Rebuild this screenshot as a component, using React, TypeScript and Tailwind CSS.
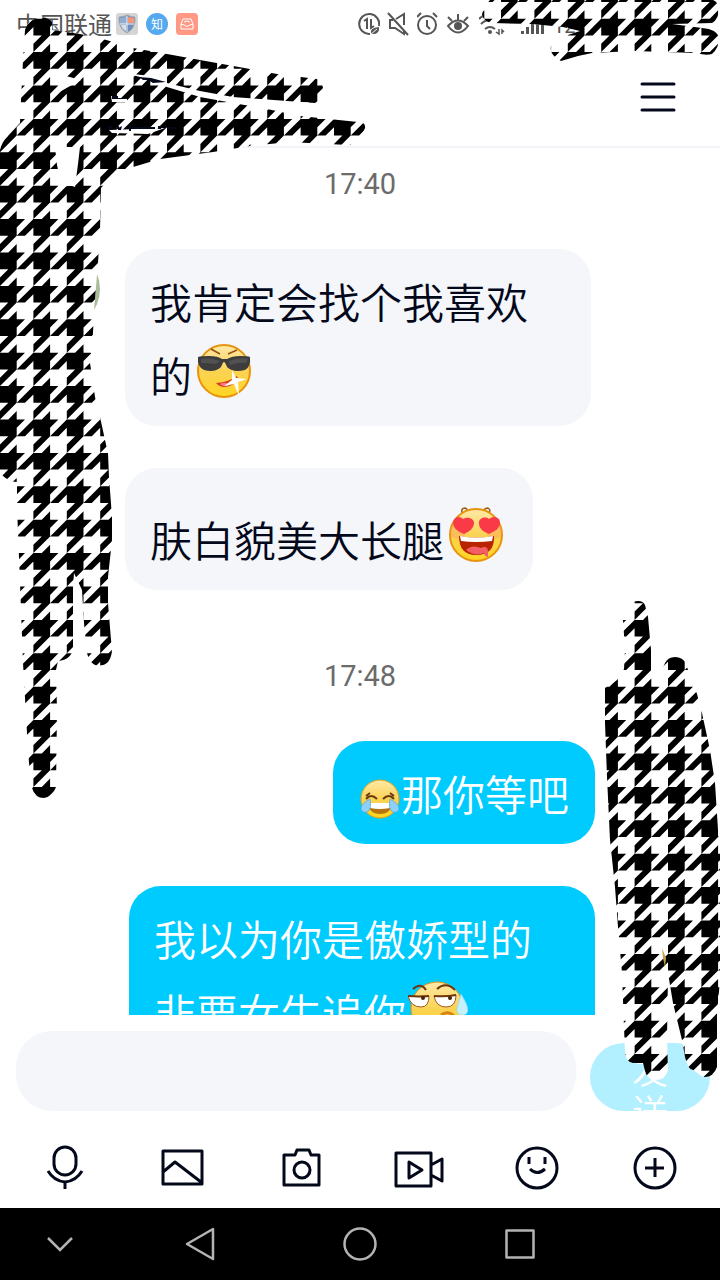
import type { ReactNode } from "react";

const INK = "#03081a";
const CELL = 33.4;

// one path holding every tooth of the houndstooth between two columns
const buildTeeth = (fromCol: number, toCol: number) => {
  const u = CELL / 4;
  const parts: string[] = [];
  for (let row = -1; row < 34; row++) {
    for (let col = fromCol; col < toCol; col++) {
      const at = (px: number, py: number) =>
        `${(col * CELL + px * u).toFixed(1)} ${(row * CELL + 18.7 + py * u).toFixed(1)}`;
      parts.push(
        `M${at(0, 0)}L${at(3, 0)}L${at(2, 1)}L${at(2, 2)}L${at(0, 4)}L${at(0, 3)}L${at(1, 2)}L${at(0, 2)}Z`,
        `M${at(4, 0)}L${at(4, 1)}L${at(3, 2)}L${at(2, 2)}Z`,
        `M${at(2, 3)}L${at(2, 4)}L${at(1, 4)}Z`
      );
    }
  }
  return parts.join("");
};

const leftTeeth = buildTeeth(0, 12);
const rightTeeth = buildTeeth(13, 22);

const LEFT_SHAPE =
  "M25 30Q28 20 38 18Q48 16 52 22L52 30L80 34L103 39L133 48L167 54L200 60L250 69L277 74L317 79Q322 80 323 88Q322 99 315 103L287 101L233 97L200 91L167 83L140 75L167 87L200 97L233 103L267 109L300 116L358 122Q366 122 365 128Q362 138 350 145L327 144L290 142L250 146L213 152L160 159L133 167L113 175L101 188L100 230L98 263L94 310L93 333L90 363L95 397L100 417L105 440L108 453L109 477L112 517L112 540L108 577L108 603L111 640Q114 654 108 662Q103 667 95 665Q89 662 87 653L84 623L82 590L74 573L73 587L73 647Q72 660 58 661L56 670L57 710L56 787Q53 796 44 798Q35 798 32 788L29 763L27 733L23 663L20 583L17 507L17 482Q8 482 0 473V150Q2 142 7 137L20 123L21 100L23 60Z";

const TOP_SHAPE =
  "M490 0Q482 8 482 15Q484 22 493 23L532 24L563 27L580 31L568 35L551 46Q549 55 561 61L578 56L592 53L633 51L697 53Q706 56 712 54Q719 48 719 38Q717 29 702 28L672 24L712 23Q719 19 719 8Q718 2 713 0Z";

const RIGHT_SHAPE =
  "M633 602Q642 599 645 605L648 617L651 650L651 672L662 670L665 663Q668 657 675 657Q683 657 686 664L688 670L697 694L702 713L710 750L715 783L718 830L720 850V980L717 1013L717 1067Q713 1078 703 1077L693 1070Q688 1070 685 1057L682 1040L673 1003L668 973L667 1040L668 1070Q666 1080 655 1080Q647 1079 645 1071L643 1063Q636 1063 633 1063Q626 1062 625 1053L624 1027L622 973L618 927L615 887L610 840L607 777L605 723L605 688L617 680L624 669L625 650L623 620Z";

const LeftScribble = () => (
  <svg className="pointer-events-none absolute left-0 top-0 h-[1280px] w-[400px]" viewBox="0 0 400 1280" aria-hidden="true">
    <clipPath id="left-shape">
      <path d={LEFT_SHAPE} />
    </clipPath>
    <g clipPath="url(#left-shape)">
      <rect width="400" height="1280" fill="#fff" />
      <path d={leftTeeth} />
    </g>
    <path fill="#fff" d="M55 147H80L78 164L75 187Q68 184 62 188L57 165ZM66 76L81 80L54 95ZM111 96L127 99L127 102H112ZM109 130L165 128L148 134L112 133ZM125 73L150 76L165 83L140 77Z" />
    <path fill={INK} d="M139 77L151 78L166 82L153 83L148 80L143 80ZM112 96H118V98H127V99H112ZM108 126H112V130H109ZM117 126H119V129H117ZM122 126L121 130H118V128ZM129 125H131V131H129ZM132 127H155V129H132ZM158 126H161V129H158ZM169 127H176V129H169Z" />
  </svg>
);

const RightScribble = () => (
  <svg className="pointer-events-none absolute right-0 top-0 h-[1280px] w-[260px]" viewBox="460 0 260 1280" aria-hidden="true">
    <clipPath id="right-shape">
      <path d={TOP_SHAPE} />
      <path d={RIGHT_SHAPE} />
    </clipPath>
    <g clipPath="url(#right-shape)">
      <rect x="460" width="260" height="1280" fill="#fff" />
      <path d={rightTeeth} />
    </g>
    <path d="M662 948L666 958L665 967L663 958Z" fill="#c8a04a" />
  </svg>
);

const StatusBar = () => (
  <div className="flex h-12 shrink-0 items-center justify-between pl-4 text-[#555]">
    <div className="flex items-center">
      <span className="mr-1 text-2xl">中国联通</span>
      <svg className="mr-2" width="22" height="22" viewBox="0 0 22 22">
        <rect width="22" height="22" rx="3" fill="#d5d5d5" />
        <path d="M11 2Q15 4 19 4Q20 15 11 20Q2 15 3 4Q7 4 11 2Z" fill="#6d8fc0" stroke="#aaa" />
        <path d="M11 3V11H4V5Q8 5 11 3Z" fill="#93acd2" />
        <path d="M12 4L18 5V10H12Z" fill="#f59676" />
        <path d="M5 12H10V18Q6 16 5 12Z" fill="#d8dfea" />
        <path d="M11 3V19M4 11H18" stroke="#f3f3f3" strokeWidth="1" />
      </svg>
      <span className="mr-2 flex size-[22px] items-center justify-center rounded-full bg-[#55a9ee] text-xs text-white">知</span>
      <svg width="22" height="22" viewBox="0 0 22 22" fill="none" stroke="#fff" strokeWidth="1">
        <rect width="22" height="22" rx="4" fill="#ff9985" stroke="none" />
        <path d="M7 6H15L17 11V16H5V11ZM5 11L8 12Q11 15 14 12L17 11M8 9Q11 7 14 9" />
      </svg>
    </div>
    <div className="flex w-[362px] items-center">
      <svg className="mr-[7px]" width="22" height="24" viewBox="0 0 22 24" fill="none" stroke="currentColor" strokeWidth="2">
        <path d="M12 22A10 10 0 1 1 21 14" />
        <path d="M6 9L9 7V17M13 7V16L16 14" />
        <path d="M13 22Q11 16 21 15Q22 23 13 22Z" fill="currentColor" stroke="none" />
        <path d="M13 22L19 17" stroke="#fff" strokeWidth="1" />
      </svg>
      <svg className="mr-2" width="22" height="24" viewBox="0 0 22 24" fill="none" stroke="currentColor" strokeWidth="2">
        <path d="M1 1L21 23M9 7L17 2V13M6 8H3V16H8L17 22V18" />
      </svg>
      <svg className="mr-2" width="22" height="24" viewBox="0 0 22 24" fill="none" stroke="currentColor" strokeWidth="2">
        <circle cx="10" cy="13" r="9" />
        <path d="M10 8V14L13 17M0 5L4 1M16 1L20 5" />
      </svg>
      <svg className="mr-2" width="24" height="24" viewBox="0 0 24 24" fill="none" stroke="currentColor" strokeWidth="2">
        <path d="M1 14Q11 3 21 14Q11 27 1 14ZM11 8V2M5 9L1 5M17 9L21 5" />
        <circle cx="11" cy="14" r="4" fill="currentColor" stroke="none" />
      </svg>
      <svg className="mr-4" width="26" height="24" viewBox="0 0 26 24" fill="none" stroke="currentColor" strokeWidth="2">
        <path d="M0 7Q4 3 9 3M2 12Q6 8 11 8M6 17Q11 13 16 17" />
        <circle cx="11" cy="20" r="2" fill="currentColor" stroke="none" />
        <path d="M20 17V22L17 20M23 22V18L25 20" strokeWidth="1.500" />
      </svg>
      <svg className="mr-2" width="24" height="24" viewBox="0 0 24 24" fill="currentColor">
        <path d="M0 19H3V22H0ZM5 15H8V22H5ZM10 11H13V22H10ZM15 7H18V22H15ZM20 3H23V22H20Z" />
      </svg>
      <span className="pt-1 font-[Roboto] text-xl">12</span>
    </div>
  </div>
);

const YellowFill = ({ id }: { id: string }) => (
  <defs>
    <linearGradient id={id} x1="0" y1="0" x2="0" y2="1">
      <stop offset="0" stopColor="#ffe9a8" />
      <stop offset="0.5" stopColor="#fbd355" />
      <stop offset="1" stopColor="#ffd51f" />
    </linearGradient>
  </defs>
);

const CoolFace = () => (
  <svg className="ml-1 inline-block size-14 align-[-6px]" viewBox="0 0 56 56" role="img" aria-label="得意">
    <YellowFill id="cool" />
    <circle cx="28" cy="28" r="26" fill="url(#cool)" stroke="#e8930c" strokeWidth="2" />
    <path d="M15 6L24 11M41 7L32 11" stroke="#96500a" strokeWidth="1.500" />
    <path d="M2 14Q5 13 13 13Q22 13 26 16H31Q36 13 44 13Q52 13 54 14Q55 24 49 27Q37 30 31 24Q29 19 28 19Q27 19 25 24Q19 30 8 27Q1 24 2 14Z" fill="#3d3d3d" />
    <path d="M5 16Q14 14 24 18L20 21Q10 20 5 20ZM33 18Q42 14 52 16L50 20Q42 19 34 22Z" fill="#666" opacity=".5" />
    <path d="M20 40Q33 39 41 33Q44 38 36 42Q26 47 20 40Z" fill="#d83c1e" />
    <path d="M24 41Q29 38 34 42Q28 45 24 41Z" fill="#ff7b83" />
    <path d="M36 27L40 35L51 36L42 39L43 53L38 41L28 43L36 37Z" fill="#fff" />
  </svg>
);

const LoveFace = () => (
  <svg className="ml-1 inline-block size-14 align-[-6px]" viewBox="0 0 56 56" role="img" aria-label="花痴">
    <YellowFill id="love" />
    <path d="M14 6Q13 1 17 1Q20 2 19 5M36 5Q36 1 40 1Q43 3 41 6" fill="none" stroke="#9a5a10" strokeWidth="1.500" />
    <circle cx="28" cy="28" r="26" fill="url(#love)" stroke="#e8930c" strokeWidth="2" />
    <circle cx="10" cy="24" r="8" fill="#ff9b5b" opacity=".4" />
    <circle cx="46" cy="24" r="8" fill="#ff9b5b" opacity=".4" />
    <path d="M16 27Q5 23 5 16C6 9 12 9 15 12C20 9 27 12 26 17Q25 23 16 27ZM41 27Q31 23 31 17C30 11 37 9 41 12C44 9 51 9 52 15Q53 22 41 27Z" fill="#fb3a47" />
    <path d="M11 29Q28 32 46 29Q47 48 28 48Q11 48 11 29Z" fill="#b82300" />
    <path d="M12 29Q28 32 45 29L44 34Q28 36 13 34Z" fill="#fff" />
    <path d="M18 43Q24 37 33 41Q40 38 40 45V50L37 49L36 46Q27 50 18 43Z" fill="#f45f67" />
  </svg>
);

const JoyFace = () => (
  <svg className="mx-px inline-block size-10 align-[-8px]" viewBox="0 0 40 40" role="img" aria-label="笑哭">
    <YellowFill id="joy" />
    <circle cx="20" cy="20" r="19" fill="url(#joy)" stroke="#e7a014" />
    <path d="M6 20Q11 14 17 20M23 20Q29 14 34 20M6 17L10 14M34 17L30 14" fill="none" stroke="#6c3a0c" strokeWidth="2" />
    <path d="M8 24H32Q31 35 20 35Q9 35 8 24Z" fill="#b8740e" />
    <path d="M9 24H31L30 29Q20 31 10 29Z" fill="#fff" />
    <path d="M10 20Q12 31 7 33Q1 34 1 29Q2 24 10 20ZM30 20Q28 31 33 33Q39 34 39 29Q38 24 30 20Z" fill="#8fd0f7" stroke="#4fa6dd" strokeWidth=".7" />
  </svg>
);

const SweatFace = () => (
  <svg className="ml-[2px] inline-block h-14 w-[60px] align-[-6px]" viewBox="0 0 60 56" role="img" aria-label="无语">
    <YellowFill id="sweat" />
    <circle cx="29" cy="28" r="26" fill="url(#sweat)" stroke="#e8930c" />
    <path d="M5 9Q13 2 18 10M29 9Q38 1 47 10" fill="none" stroke="#6b350b" strokeWidth="2" />
    <path d="M0 16Q11 17 21 16Q21 27 13 27Q3 27 0 16ZM26 16Q38 17 48 15Q48 27 38 27Q28 27 26 16Z" fill="#fff" stroke="#a35a1c" />
    <path d="M0 16Q11 17 21 16M26 16Q38 17 48 15" fill="none" stroke="#70380c" strokeWidth="2" />
    <circle cx="15" cy="18" r="2" fill="#4a2207" />
    <circle cx="42" cy="18" r="2" fill="#4a2207" />
    <path d="M53 14Q60 25 60 31Q58 36 53 35Q48 34 49 28Z" fill="#c5f0fd" stroke="#85d8f5" strokeWidth=".7" />
    <path d="M33 35Q40 30 46 36" fill="none" stroke="#d88414" strokeWidth="3" />
  </svg>
);

const Time = ({ children }: { children: ReactNode }) => (
  <time className="self-center font-[Roboto] text-[29px] leading-10 text-[#6b6b6b]">{children}</time>
);

const tools = [
  {
    label: "语音",
    d: "M14 13A11 11 0 0 1 36 13V19A11 11 0 0 1 14 19ZM8 26Q14 36 25 37Q36 36 42 26M25 37V44",
  },
  { label: "图片", d: "M5 6H44V39H5ZM5 27L17 17L43 37" },
  {
    label: "拍照",
    d: "M8 10H19L21 5H33L35 10H43V40H8ZM34 25A8 8 0 1 1 18 25A8 8 0 1 1 34 25Z",
  },
  { label: "视频", d: "M2 8H37V41H2ZM15 17V33L28 25ZM37 20L48 14V36L37 30" },
  {
    label: "表情",
    d: "M45 23A20 20 0 1 1 5 23A20 20 0 1 1 45 23ZM17 12V19M33 12V19M18 24Q25 31 33 24",
  },
  {
    label: "更多",
    d: "M45 23A20 20 0 1 1 5 23A20 20 0 1 1 45 23ZM15 23H34M25 13V32",
  },
];

export default function App() {
  return (
    <div className="relative flex h-screen flex-col overflow-hidden bg-white font-['Noto_Sans_CJK_SC',sans-serif]">
      <StatusBar />

      <header className="flex h-[100px] shrink-0 items-center justify-end border-b-2 border-[#f3f3f9] px-11">
        <button type="button" aria-label="菜单">
          <svg width="36" height="32" viewBox="0 0 36 32" stroke={INK} strokeWidth="3" strokeLinecap="round">
            <path d="M2 3H34M2 16H34M2 29H34" />
          </svg>
        </button>
      </header>

      <main className="flex min-h-0 flex-1 flex-col overflow-hidden px-[125px] pt-4 text-[42px] leading-[74px] *:shrink-0">
        <Time>17:40</Time>
        <div className="relative mt-[45px] w-[466px] rounded-[32px] bg-[#f4f6fa] px-[25px] pt-[15px] pb-[14px] font-[350] text-[#03081a]">
          <span className="absolute top-0 -left-[105px] size-20 rounded-full bg-[#a9bd9a]" />
          我肯定会找个我喜欢的
          <CoolFace />
        </div>
        <div className="mt-[42px] self-start rounded-[32px] bg-[#f4f6fa] pt-[34px] pr-[29px] pb-[14px] pl-[25px] font-[350] whitespace-nowrap text-[#03081a]">
          肤白貌美大长腿
          <LoveFace />
        </div>
        <div className="mt-[66px] flex flex-col">
          <Time>17:48</Time>
        </div>
        <div className="mt-[45px] self-end rounded-[32px] bg-[#00cbff] px-[26px] pt-[15px] pb-[14px] font-[350] text-white">
          <JoyFace />
          那你等吧
        </div>
        <div className="mt-[42px] w-[466px] self-end rounded-[32px] bg-[#00cbff] px-[25px] pt-[15px] pb-[14px] font-[350] text-white">
          我以为你是傲娇型的非要女生追你
          <SweatFace />
        </div>
      </main>

      <footer className="shrink-0">
        <div className="flex items-end gap-[14px] pt-4 pr-[10px] pl-4">
          <input
            type="text"
            aria-label="消息"
            className="h-20 min-w-0 flex-1 rounded-[36px] bg-[#f4f6fa] px-6 text-3xl outline-none"
          />
          <button
            type="button"
            className="flex h-[68px] w-[120px] items-start justify-center overflow-hidden rounded-[34px] bg-[#b2efff] px-10 pt-1 text-4xl leading-[42px] font-[350] text-white"
          >
            <span className="w-9">发送</span>
          </button>
        </div>
        <div className="grid h-[97px] grid-cols-6 items-center px-[6px] pt-4">
          {tools.map((tool) => (
            <button key={tool.label} type="button" aria-label={tool.label} className="flex justify-center">
              <svg width="50" height="46" viewBox="0 0 50 46" fill="none" stroke={INK} strokeWidth="3" strokeLinejoin="round">
                <path d={tool.d} />
              </svg>
            </button>
          ))}
        </div>
        <nav className="grid h-[72px] grid-cols-[3fr_4fr_4fr_4fr_3fr] items-center bg-black *:flex *:justify-center">
          <button type="button" aria-label="收起">
            <svg width="36" height="36" viewBox="0 0 36 36" fill="none" stroke="#b3b3b3" strokeWidth="2.500">
              <path d="M6 12L18 24L30 12" />
            </svg>
          </button>
          <button type="button" aria-label="返回">
            <svg width="36" height="36" viewBox="0 0 36 36" fill="none" stroke="#b3b3b3" strokeWidth="2.500" strokeLinejoin="round">
              <path d="M31 3V33L5 18Z" />
            </svg>
          </button>
          <button type="button" aria-label="主页">
            <svg width="36" height="36" viewBox="0 0 36 36" fill="none" stroke="#b3b3b3" strokeWidth="2.500">
              <circle cx="18" cy="18" r="15.500" />
            </svg>
          </button>
          <button type="button" aria-label="最近任务">
            <svg width="36" height="36" viewBox="0 0 36 36" fill="none" stroke="#b3b3b3" strokeWidth="2.500" strokeLinejoin="round">
              <rect x="4.500" y="4.500" width="27" height="27" />
            </svg>
          </button>
        </nav>
      </footer>

      <LeftScribble />
      <RightScribble />
    </div>
  );
}
